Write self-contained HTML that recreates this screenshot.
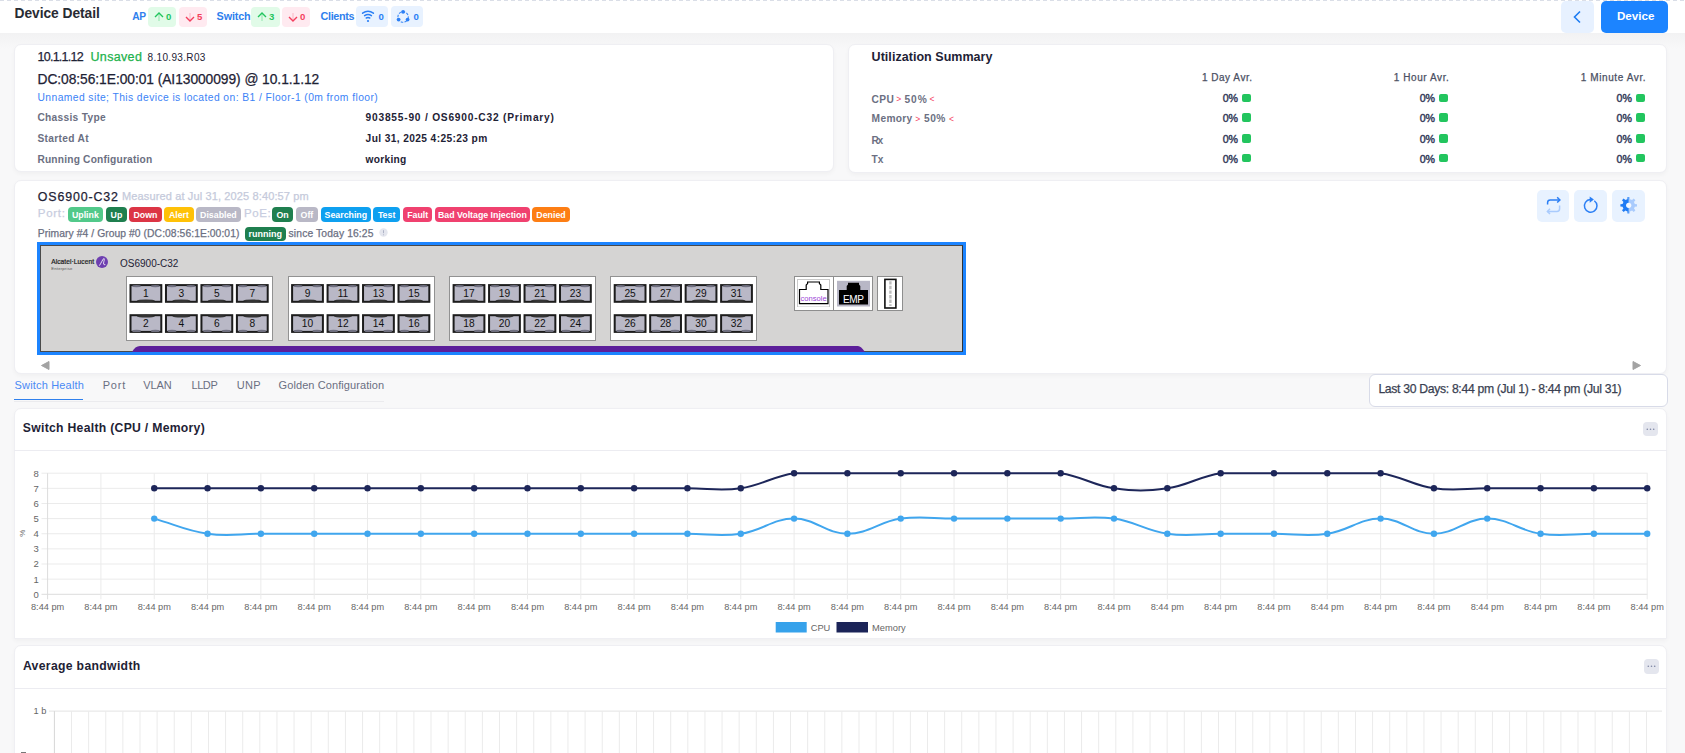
<!DOCTYPE html><html><head><meta charset="utf-8"><style>
html,body{margin:0;padding:0;}
body{width:1685px;height:753px;overflow:hidden;position:relative;background:#f8f8f9;font-family:"Liberation Sans", sans-serif;}
.t{position:absolute;line-height:1;white-space:nowrap;}
.lt{color:#f43f5e;font-size:0.75em;}
.bd{position:absolute;box-sizing:border-box;border-radius:4px;color:#fff;font-weight:700;font-size:8.8px;line-height:16.5px;text-align:center;white-space:nowrap;}
.port{position:absolute;box-sizing:border-box;width:33px;height:19px;border:2px solid #1a1a1a;background:#b9b8c6;font-size:10px;line-height:15px;text-align:center;color:#111;}
</style></head><body>
<div style="position:absolute;left:0px;top:33px;width:1685px;height:16px;background:linear-gradient(#f2f2f3,#f8f8f9);"></div><div style="position:absolute;left:0px;top:0px;width:1685px;height:33px;background:#fff;"></div><div style="position:absolute;left:0px;top:0px;width:1685px;height:1px;background:repeating-linear-gradient(90deg,#dadee7 0 4px,transparent 4px 7px);"></div><div class="t" id="t6746a733" style="left:14.5px;top:7.22px;font-size:13.8px;color:#282b33;font-weight:700;letter-spacing:-0.050px;">Device Detail</div><div class="t" id="t0492b094" style="left:132.3px;top:11.67px;font-size:10.2px;color:#2f80ed;font-weight:700;letter-spacing:-0.5px;">AP</div><div style="position:absolute;left:148px;top:7px;width:28px;height:20px;background:#e1fbe8;border-radius:4px;"></div><div style="position:absolute;left:179px;top:7px;width:28px;height:20px;background:#ffeaf0;border-radius:4px;"></div><div class="t" id="t892bfa46" style="left:216.6px;top:11.16px;font-size:10.8px;color:#2f80ed;font-weight:700;letter-spacing:-0.140px;">Switch</div><div style="position:absolute;left:251px;top:7px;width:29px;height:20px;background:#e1fbe8;border-radius:4px;"></div><div style="position:absolute;left:282px;top:7px;width:28px;height:20px;background:#ffeaf0;border-radius:4px;"></div><div class="t" id="te763ea5b" style="left:320.6px;top:11.16px;font-size:10.8px;color:#2f80ed;font-weight:700;letter-spacing:-0.367px;">Clients</div><div style="position:absolute;left:356px;top:6px;width:32px;height:21px;background:#e8f2ff;border-radius:4px;"></div><div style="position:absolute;left:391px;top:6px;width:32px;height:21px;background:#e8f2ff;border-radius:4px;"></div><svg style="position:absolute;left:154px;top:12px" width="10" height="10" viewBox="0 0 10 10"><path d="M1 5 L5 1 L9 5" fill="none" stroke="#22c55e" stroke-width="1.4"/><path d="M5 2 V9" stroke="#22c55e" stroke-opacity=".35" stroke-width="1.2"/></svg><div class="t" id="t59a71d01" style="left:166px;top:12.27px;font-size:9.6px;color:#22c55e;font-weight:700;">0</div><svg style="position:absolute;left:185px;top:12px" width="10" height="10" viewBox="0 0 10 10"><path d="M1 5 L5 9 L9 5" fill="none" stroke="#f43f5e" stroke-width="1.4"/><path d="M5 1 V8" stroke="#f43f5e" stroke-opacity=".25" stroke-width="1.2"/></svg><div class="t" id="t8c942b37" style="left:197px;top:12.27px;font-size:9.6px;color:#f43f5e;font-weight:700;">5</div><svg style="position:absolute;left:257px;top:12px" width="10" height="10" viewBox="0 0 10 10"><path d="M1 5 L5 1 L9 5" fill="none" stroke="#22c55e" stroke-width="1.4"/><path d="M5 2 V9" stroke="#22c55e" stroke-opacity=".35" stroke-width="1.2"/></svg><div class="t" id="tc1f784ae" style="left:269px;top:12.27px;font-size:9.6px;color:#22c55e;font-weight:700;">3</div><svg style="position:absolute;left:288px;top:12px" width="10" height="10" viewBox="0 0 10 10"><path d="M1 5 L5 9 L9 5" fill="none" stroke="#f43f5e" stroke-width="1.4"/><path d="M5 1 V8" stroke="#f43f5e" stroke-opacity=".25" stroke-width="1.2"/></svg><div class="t" id="tf4d4778f" style="left:300px;top:12.27px;font-size:9.6px;color:#f43f5e;font-weight:700;">0</div><svg style="position:absolute;left:0;top:0" width="1685" height="40"><path d="M362.6 13.2 Q368 9.2 373.4 13.2" fill="none" stroke="#2b7ff5" stroke-width="1.5" stroke-linecap="round"/><path d="M364.6 15.6 Q368 13.2 371.4 15.6" fill="none" stroke="#2b7ff5" stroke-width="1.5" stroke-linecap="round"/><path d="M366.3 18 Q368 17 369.7 18" fill="none" stroke="#2b7ff5" stroke-width="1.5" stroke-linecap="round"/><circle cx="368" cy="21" r="1.1" fill="#2b7ff5"/></svg><div class="t" id="t0e5e067a" style="left:378.5px;top:12.27px;font-size:9.6px;color:#2b7ff5;font-weight:700;">0</div><svg style="position:absolute;left:0;top:0" width="1685" height="40"><circle cx="403.1" cy="17" r="5.2" fill="none" stroke="#2b7ff5" stroke-width="1.1" stroke-dasharray="2.6 1.3" opacity=".9"/><circle cx="403.1" cy="11.8" r="1.9" fill="#2b7ff5"/><circle cx="398.6" cy="19.6" r="1.9" fill="#2b7ff5"/><circle cx="407.6" cy="19.6" r="1.9" fill="#2b7ff5"/></svg><div class="t" id="t439e3643" style="left:413.5px;top:12.27px;font-size:9.6px;color:#2b7ff5;font-weight:700;">0</div><div style="position:absolute;left:1561px;top:1px;width:33px;height:32px;background:#e7f1ff;border-radius:5px;"></div><svg style="position:absolute;left:1572px;top:10px" width="10" height="14" viewBox="0 0 10 14"><path d="M8 1.5 L2.5 7 L8 12.5" fill="none" stroke="#1d7cf2" stroke-width="1.6"/></svg><div style="position:absolute;left:1601px;top:1px;width:67px;height:32px;background:#1c84ff;border-radius:5px;"></div><div class="t" id="t63cf27a8" style="left:1616.9px;top:10.18px;font-size:11.6px;color:#fff;font-weight:700;letter-spacing:0.020px;">Device</div><div style="position:absolute;left:14px;top:44px;width:820px;height:128px;background:#fff;border:1px solid #efeff3;border-radius:7px;box-sizing:border-box;box-shadow:0 2px 4px rgba(0,0,0,.035);"></div><div style="position:absolute;left:848px;top:44px;width:819px;height:129px;background:#fff;border:1px solid #efeff3;border-radius:7px;box-sizing:border-box;box-shadow:0 2px 4px rgba(0,0,0,.035);"></div><div style="position:absolute;left:14px;top:179.5px;width:1653px;height:194.3px;background:#fff;border:1px solid #efeff3;border-radius:7px;box-sizing:border-box;box-shadow:0 2px 4px rgba(0,0,0,.035);"></div><div style="position:absolute;left:14px;top:408px;width:1653px;height:231px;background:#fff;border:1px solid #efeff3;border-radius:7px;box-sizing:border-box;box-shadow:0 2px 4px rgba(0,0,0,.035);border-bottom-left-radius:0;border-bottom-right-radius:0;"></div><div style="position:absolute;left:14px;top:645px;width:1653px;height:130px;background:#fff;border:1px solid #efeff3;border-radius:7px;box-sizing:border-box;box-shadow:0 2px 4px rgba(0,0,0,.035);"></div><div class="t" id="tde0dabcd" style="left:37.5px;top:51.32px;font-size:12.5px;color:#1e2235;font-weight:400;letter-spacing:-0.750px;-webkit-text-stroke:0.25px currentColor;">10.1.1.12</div><div class="t" id="t1f8993fd" style="left:90.5px;top:51.32px;font-size:12.5px;color:#22b24c;font-weight:400;letter-spacing:0.333px;-webkit-text-stroke:0.25px currentColor;">Unsaved</div><div class="t" id="t35ef3340" style="left:147.5px;top:53.44px;font-size:10px;color:#1e2235;font-weight:400;letter-spacing:0.340px;">8.10.93.R03</div><div class="t" id="t7c8b2ab8" style="left:37.5px;top:73.32px;font-size:13.8px;color:#1e2235;font-weight:400;letter-spacing:-0.056px;-webkit-text-stroke:0.25px currentColor;">DC:08:56:1E:00:01 (AI13000099) @ 10.1.1.12</div><div class="t" id="tb4ae7405" style="left:37.5px;top:93.18px;font-size:10.3px;color:#3b82f6;font-weight:400;letter-spacing:0.419px;">Unnamed site; This device is located on: B1 / Floor-1 (0m from floor)</div><div class="t" id="t512f0c50" style="left:37.4px;top:113.27px;font-size:10.2px;color:#6b6f82;font-weight:700;letter-spacing:0.300px;">Chassis Type</div><div class="t" id="ta5a6ee7c" style="left:365.6px;top:113.27px;font-size:10.2px;color:#1e2235;font-weight:700;letter-spacing:0.777px;">903855-90 / OS6900-C32 (Primary)</div><div class="t" id="t8f5a7e33" style="left:37.4px;top:134.17px;font-size:10.2px;color:#6b6f82;font-weight:700;letter-spacing:0.333px;">Started At</div><div class="t" id="t9136239f" style="left:365.6px;top:134.17px;font-size:10.2px;color:#1e2235;font-weight:700;letter-spacing:0.382px;">Jul 31, 2025 4:25:23 pm</div><div class="t" id="tb8d32ed6" style="left:37.4px;top:155.07px;font-size:10.2px;color:#6b6f82;font-weight:700;letter-spacing:0.195px;">Running Configuration</div><div class="t" id="ta1649bf4" style="left:365.6px;top:155.07px;font-size:10.2px;color:#1e2235;font-weight:700;letter-spacing:0.267px;">working</div><div class="t" id="t46e40325" style="left:871.6px;top:50.52px;font-size:12.5px;color:#1e2235;font-weight:700;letter-spacing:0.039px;">Utilization Summary</div><div class="t" id="t7a2198f8" style="left:1201.9px;top:73.03px;font-size:10px;color:#4b5063;font-weight:400;letter-spacing:0.522px;-webkit-text-stroke:0.25px currentColor;">1 Day Avr.</div><div class="t" id="t6891046d" style="left:1393.7px;top:73.03px;font-size:10px;color:#4b5063;font-weight:400;letter-spacing:0.580px;-webkit-text-stroke:0.25px currentColor;">1 Hour Avr.</div><div class="t" id="t676b4f2e" style="left:1580.8px;top:73.03px;font-size:10px;color:#4b5063;font-weight:400;letter-spacing:0.592px;-webkit-text-stroke:0.25px currentColor;">1 Minute Avr.</div><div class="t" id="t26962493" style="left:896.2px;top:95.40px;font-size:8.5px;color:#f43f5e;font-weight:400;">&gt;</div><div class="t" id="td6754439" style="left:904.5px;top:94.57px;font-size:10.2px;color:#6b6f82;font-weight:700;letter-spacing:0.900px;">50%</div><div class="t" id="t37bb389e" style="left:929.5px;top:95.40px;font-size:8.5px;color:#f43f5e;font-weight:400;">&lt;</div><div class="t" id="tdbb544d3" style="left:915.3px;top:115.30px;font-size:8.5px;color:#f43f5e;font-weight:400;">&gt;</div><div class="t" id="t1c25f8e0" style="left:924px;top:114.47px;font-size:10.2px;color:#6b6f82;font-weight:700;letter-spacing:0.500px;">50%</div><div class="t" id="t0425b11f" style="left:949.1px;top:115.30px;font-size:8.5px;color:#f43f5e;font-weight:400;">&lt;</div><div class="t" id="tf166ce25" style="left:871.6px;top:94.57px;font-size:10.2px;color:#6b6f82;font-weight:700;letter-spacing:0.400px;">CPU</div><div class="t" style="right:447px;top:93.43px;font-size:10.6px;color:#363d5c;font-weight:400;-webkit-text-stroke:0.45px #363d5c;letter-spacing:0px;">0%</div><div style="position:absolute;left:1242px;top:93.5px;width:9px;height:8.3px;background:#22c55e;border-radius:2px;"></div><div class="t" style="right:250px;top:93.43px;font-size:10.6px;color:#363d5c;font-weight:400;-webkit-text-stroke:0.45px #363d5c;letter-spacing:0px;">0%</div><div style="position:absolute;left:1439px;top:93.5px;width:9px;height:8.3px;background:#22c55e;border-radius:2px;"></div><div class="t" style="right:53.200000000000045px;top:93.43px;font-size:10.6px;color:#363d5c;font-weight:400;-webkit-text-stroke:0.45px #363d5c;letter-spacing:0px;">0%</div><div style="position:absolute;left:1635.8px;top:93.5px;width:9px;height:8.3px;background:#22c55e;border-radius:2px;"></div><div class="t" id="td928c392" style="left:871.6px;top:114.47px;font-size:10.2px;color:#6b6f82;font-weight:700;letter-spacing:0.320px;">Memory</div><div class="t" style="right:447px;top:113.23px;font-size:10.6px;color:#363d5c;font-weight:400;-webkit-text-stroke:0.45px #363d5c;letter-spacing:0px;">0%</div><div style="position:absolute;left:1242px;top:113.3px;width:9px;height:8.3px;background:#22c55e;border-radius:2px;"></div><div class="t" style="right:250px;top:113.23px;font-size:10.6px;color:#363d5c;font-weight:400;-webkit-text-stroke:0.45px #363d5c;letter-spacing:0px;">0%</div><div style="position:absolute;left:1439px;top:113.3px;width:9px;height:8.3px;background:#22c55e;border-radius:2px;"></div><div class="t" style="right:53.200000000000045px;top:113.23px;font-size:10.6px;color:#363d5c;font-weight:400;-webkit-text-stroke:0.45px #363d5c;letter-spacing:0px;">0%</div><div style="position:absolute;left:1635.8px;top:113.3px;width:9px;height:8.3px;background:#22c55e;border-radius:2px;"></div><div class="t" id="t4b9c8d89" style="left:871.6px;top:135.57px;font-size:10.2px;color:#6b6f82;font-weight:700;letter-spacing:-1.400px;">Rx</div><div class="t" style="right:447px;top:134.23px;font-size:10.6px;color:#363d5c;font-weight:400;-webkit-text-stroke:0.45px #363d5c;letter-spacing:0px;">0%</div><div style="position:absolute;left:1242px;top:134.3px;width:9px;height:8.3px;background:#22c55e;border-radius:2px;"></div><div class="t" style="right:250px;top:134.23px;font-size:10.6px;color:#363d5c;font-weight:400;-webkit-text-stroke:0.45px #363d5c;letter-spacing:0px;">0%</div><div style="position:absolute;left:1439px;top:134.3px;width:9px;height:8.3px;background:#22c55e;border-radius:2px;"></div><div class="t" style="right:53.200000000000045px;top:134.23px;font-size:10.6px;color:#363d5c;font-weight:400;-webkit-text-stroke:0.45px #363d5c;letter-spacing:0px;">0%</div><div style="position:absolute;left:1635.8px;top:134.3px;width:9px;height:8.3px;background:#22c55e;border-radius:2px;"></div><div class="t" id="tdec90b6d" style="left:871.6px;top:155.17px;font-size:10.2px;color:#6b6f82;font-weight:700;letter-spacing:0.000px;">Tx</div><div class="t" style="right:447px;top:154.03px;font-size:10.6px;color:#363d5c;font-weight:400;-webkit-text-stroke:0.45px #363d5c;letter-spacing:0px;">0%</div><div style="position:absolute;left:1242px;top:154px;width:9px;height:8.3px;background:#22c55e;border-radius:2px;"></div><div class="t" style="right:250px;top:154.03px;font-size:10.6px;color:#363d5c;font-weight:400;-webkit-text-stroke:0.45px #363d5c;letter-spacing:0px;">0%</div><div style="position:absolute;left:1439px;top:154px;width:9px;height:8.3px;background:#22c55e;border-radius:2px;"></div><div class="t" style="right:53.200000000000045px;top:154.03px;font-size:10.6px;color:#363d5c;font-weight:400;-webkit-text-stroke:0.45px #363d5c;letter-spacing:0px;">0%</div><div style="position:absolute;left:1635.8px;top:154px;width:9px;height:8.3px;background:#22c55e;border-radius:2px;"></div><div class="t" id="t32b09132" style="left:37.8px;top:190.80px;font-size:12.4px;color:#1e2235;font-weight:400;letter-spacing:0.856px;-webkit-text-stroke:0.25px currentColor;">OS6900-C32</div><div class="t" id="tf94e7f01" style="left:122px;top:191.19px;font-size:11px;color:#c5cadb;font-weight:400;letter-spacing:0.132px;-webkit-text-stroke:0.25px currentColor;">Measured at Jul 31, 2025 8:40:57 pm</div><div class="t" id="t7cd7a179" style="left:37.8px;top:207.87px;font-size:11.5px;color:#c8cde0;font-weight:400;letter-spacing:0.700px;-webkit-text-stroke:0.25px currentColor;">Port:</div><div class="t" id="t058673cd" style="left:244.1px;top:207.87px;font-size:11.5px;color:#c8cde0;font-weight:400;letter-spacing:0.567px;-webkit-text-stroke:0.25px currentColor;">PoE:</div><div class="bd" style="left:68.1px;top:207px;width:34.6px;height:15px;background:#52c98a;">Uplink</div><div class="bd" style="left:106px;top:207px;width:20.9px;height:15px;background:#1f7f4f;">Up</div><div class="bd" style="left:129.2px;top:207px;width:32.4px;height:15px;background:#dc3545;">Down</div><div class="bd" style="left:164.1px;top:207px;width:29.7px;height:15px;background:#ffc107;">Alert</div><div class="bd" style="left:196px;top:207px;width:44.8px;height:15px;background:#b9b8c6;">Disabled</div><div class="bd" style="left:272.1px;top:207px;width:20.8px;height:15px;background:#1f7f4f;">On</div><div class="bd" style="left:296.1px;top:207px;width:21.7px;height:15px;background:#b9b8c6;">Off</div><div class="bd" style="left:321px;top:207px;width:49.7px;height:15px;background:#0ea0f0;">Searching</div><div class="bd" style="left:373.1px;top:207px;width:27.0px;height:15px;background:#0ea0f0;">Test</div><div class="bd" style="left:403.1px;top:207px;width:29.3px;height:15px;background:#f0416f;">Fault</div><div class="bd" style="left:435.1px;top:207px;width:94.6px;height:15px;background:#f0416f;">Bad Voltage Injection</div><div class="bd" style="left:532.1px;top:207px;width:37.8px;height:15px;background:#fd7e14;">Denied</div><div class="t" id="t7e1746b1" style="left:37.8px;top:229.08px;font-size:10.3px;color:#6b6f82;font-weight:400;letter-spacing:0.075px;-webkit-text-stroke:0.25px currentColor;">Primary #4 / Group #0 (DC:08:56:1E:00:01)</div><div class="bd" style="left:245px;top:227.2px;width:40.7px;height:14.3px;background:#1f7f4f;font-size:9px;line-height:14.5px;">running</div><div class="t" id="tdfd09190" style="left:288.6px;top:229.08px;font-size:10.3px;color:#6b6f82;font-weight:400;letter-spacing:0.125px;-webkit-text-stroke:0.25px currentColor;">since Today 16:25</div><svg style="position:absolute;left:378.5px;top:227.5px" width="9" height="9"><circle cx="4.5" cy="4.5" r="4.2" fill="#e4e6ee"/><path d="M4.5 2.2 V5.2" stroke="#aeb3c6" stroke-width="1"/><circle cx="4.5" cy="6.7" r="0.55" fill="#aeb3c6"/></svg><div style="position:absolute;left:1537.2px;top:190px;width:31.6px;height:31.7px;background:#e8f2ff;border-radius:5px;"></div><div style="position:absolute;left:1574.3px;top:190px;width:32.6px;height:31.7px;background:#e8f2ff;border-radius:5px;"></div><div style="position:absolute;left:1612.2px;top:190px;width:32.6px;height:31.7px;background:#e8f2ff;border-radius:5px;"></div><svg style="position:absolute;left:0;top:0" width="1685" height="753"><path d="M1547.6 204.6 V202.6 Q1547.6 199.9 1550.3 199.9 H1559.6" fill="none" stroke="#2b7ff5" stroke-width="1.5"/><path d="M1557.2 197.3 L1559.9 199.9 L1557.2 202.5" fill="none" stroke="#2b7ff5" stroke-width="1.5"/><path d="M1559.6 205.4 V208.7 Q1559.6 211.4 1556.9 211.4 H1547.4" fill="none" stroke="#a9cbfd" stroke-width="1.5"/><path d="M1550 208.8 L1547.4 211.4 L1550 214" fill="none" stroke="#a9cbfd" stroke-width="1.5"/></svg><svg style="position:absolute;left:0;top:0" width="1685" height="753"><path d="M1594.31 200.74 A6.3 6.3 0 1 1 1590.40 199.60" fill="none" stroke="#2b7ff5" stroke-width="1.5"/><path d="M1589.70 196.40 L1593.90 199.60 L1589.70 202.80 Z" fill="#2b7ff5"/></svg><svg style="position:absolute;left:0;top:0" width="1685" height="753"><defs><clipPath id="gl"><rect x="1600" y="190" width="28.70" height="32"/></clipPath><clipPath id="gr"><rect x="1628.70" y="190" width="30" height="32"/></clipPath></defs><path d="M1627.35 199.25 L1627.53 196.98 L1629.87 196.98 L1630.05 199.25 L1630.53 199.38 L1631.56 199.80 L1632.02 200.06 L1633.75 198.59 L1635.41 200.25 L1633.94 201.98 L1634.18 202.41 L1634.61 203.44 L1634.75 203.95 L1637.02 204.13 L1637.02 206.47 L1634.75 206.65 L1634.62 207.13 L1634.20 208.16 L1633.94 208.62 L1635.41 210.35 L1633.75 212.01 L1632.02 210.54 L1631.59 210.78 L1630.56 211.21 L1630.05 211.35 L1629.87 213.62 L1627.53 213.62 L1627.35 211.35 L1626.87 211.22 L1625.84 210.80 L1625.38 210.54 L1623.65 212.01 L1621.99 210.35 L1623.46 208.62 L1623.22 208.19 L1622.79 207.16 L1622.65 206.65 L1620.38 206.47 L1620.38 204.13 L1622.65 203.95 L1622.78 203.47 L1623.20 202.44 L1623.46 201.98 L1621.99 200.25 L1623.65 198.59 L1625.38 200.06 L1625.81 199.82 L1626.84 199.39 Z" fill="#a9cbfd" clip-path="url(#gr)"/><path d="M1627.35 199.25 L1627.53 196.98 L1629.87 196.98 L1630.05 199.25 L1630.53 199.38 L1631.56 199.80 L1632.02 200.06 L1633.75 198.59 L1635.41 200.25 L1633.94 201.98 L1634.18 202.41 L1634.61 203.44 L1634.75 203.95 L1637.02 204.13 L1637.02 206.47 L1634.75 206.65 L1634.62 207.13 L1634.20 208.16 L1633.94 208.62 L1635.41 210.35 L1633.75 212.01 L1632.02 210.54 L1631.59 210.78 L1630.56 211.21 L1630.05 211.35 L1629.87 213.62 L1627.53 213.62 L1627.35 211.35 L1626.87 211.22 L1625.84 210.80 L1625.38 210.54 L1623.65 212.01 L1621.99 210.35 L1623.46 208.62 L1623.22 208.19 L1622.79 207.16 L1622.65 206.65 L1620.38 206.47 L1620.38 204.13 L1622.65 203.95 L1622.78 203.47 L1623.20 202.44 L1623.46 201.98 L1621.99 200.25 L1623.65 198.59 L1625.38 200.06 L1625.81 199.82 L1626.84 199.39 Z" fill="#1f7bf4" clip-path="url(#gl)"/><circle cx="1628.7" cy="205.3" r="2.6" fill="#f4f8ff"/></svg><div style="position:absolute;left:37px;top:242px;width:929px;height:113px;box-sizing:border-box;border:3px solid #1c84ff;"><div style="position:absolute;left:0;top:0;right:0;bottom:0;background:#d5d4d3;border:1px solid #4a4a4a;border-right-color:#333;"></div></div><svg style="position:absolute;left:132px;top:346px" width="733" height="6" viewBox="0 0 733 6"><path d="M0 6 Q3 0 8 0 H726 Q729 0 733 6 Z" fill="#5c1f9a"/></svg><div class="t" id="t6a12271c" style="left:51.2px;top:258.81px;font-size:6.6px;color:#1a1a1a;font-weight:400;letter-spacing:0.077px;-webkit-text-stroke:0.2px #1a1a1a;">Alcatel·Lucent</div><div class="t" id="ta7493001" style="left:51.2px;top:266.74px;font-size:4.2px;color:#555;font-weight:400;letter-spacing:0.222px;">Enterprise</div><svg style="position:absolute;left:96px;top:256px" width="12" height="12" viewBox="0 0 12 12"><circle cx="6" cy="6" r="6" fill="#6e3fb0"/><path d="M3.4 9.6 C5 7.2 6.4 4 7.6 2.7 C8.5 2 8.5 3.6 7.9 5.4 C7.3 7.4 7.4 9.4 9.3 8.6" fill="none" stroke="#fff" stroke-width="0.85"/></svg><div class="t" id="t8b9df947" style="left:120px;top:258.54px;font-size:10px;color:#1e2235;font-weight:400;">OS6900-C32</div><div style="position:absolute;left:126.2px;top:276.2px;width:147px;height:64.5px;background:#fff;border:1px solid #929292;box-sizing:border-box;"></div><div style="position:absolute;left:287.8px;top:276.2px;width:147px;height:64.5px;background:#fff;border:1px solid #929292;box-sizing:border-box;"></div><div style="position:absolute;left:449.3px;top:276.2px;width:147px;height:64.5px;background:#fff;border:1px solid #929292;box-sizing:border-box;"></div><div style="position:absolute;left:610.4px;top:276.2px;width:147px;height:64.5px;background:#fff;border:1px solid #929292;box-sizing:border-box;"></div><svg style="position:absolute;left:0;top:0" width="1685" height="753" font-family="Liberation Sans, sans-serif"><rect x="130.50" y="285.10" width="30.80" height="16.70" fill="#b9b8c6" stroke="#1c1c1c" stroke-width="2"/><ellipse cx="136.50" cy="286.10" rx="4.5" ry="1.2" fill="#707080"/><ellipse cx="155.30" cy="286.10" rx="4.5" ry="1.2" fill="#707080"/><ellipse cx="145.90" cy="300.80" rx="9" ry="1.4" fill="#333"/><text x="145.90" y="297.10" font-size="10.2" text-anchor="middle" fill="#111">1</text><rect x="130.50" y="315.20" width="30.80" height="16.70" fill="#b9b8c6" stroke="#1c1c1c" stroke-width="2"/><ellipse cx="145.90" cy="316.20" rx="9" ry="1.4" fill="#333"/><ellipse cx="136.50" cy="330.90" rx="4.5" ry="1.2" fill="#707080"/><ellipse cx="155.30" cy="330.90" rx="4.5" ry="1.2" fill="#707080"/><text x="145.90" y="327.20" font-size="10.2" text-anchor="middle" fill="#111">2</text><rect x="165.97" y="285.10" width="30.80" height="16.70" fill="#b9b8c6" stroke="#1c1c1c" stroke-width="2"/><ellipse cx="171.97" cy="286.10" rx="4.5" ry="1.2" fill="#707080"/><ellipse cx="190.77" cy="286.10" rx="4.5" ry="1.2" fill="#707080"/><ellipse cx="181.37" cy="300.80" rx="9" ry="1.4" fill="#333"/><text x="181.37" y="297.10" font-size="10.2" text-anchor="middle" fill="#111">3</text><rect x="165.97" y="315.20" width="30.80" height="16.70" fill="#b9b8c6" stroke="#1c1c1c" stroke-width="2"/><ellipse cx="181.37" cy="316.20" rx="9" ry="1.4" fill="#333"/><ellipse cx="171.97" cy="330.90" rx="4.5" ry="1.2" fill="#707080"/><ellipse cx="190.77" cy="330.90" rx="4.5" ry="1.2" fill="#707080"/><text x="181.37" y="327.20" font-size="10.2" text-anchor="middle" fill="#111">4</text><rect x="201.44" y="285.10" width="30.80" height="16.70" fill="#b9b8c6" stroke="#1c1c1c" stroke-width="2"/><ellipse cx="207.44" cy="286.10" rx="4.5" ry="1.2" fill="#707080"/><ellipse cx="226.24" cy="286.10" rx="4.5" ry="1.2" fill="#707080"/><ellipse cx="216.84" cy="300.80" rx="9" ry="1.4" fill="#333"/><text x="216.84" y="297.10" font-size="10.2" text-anchor="middle" fill="#111">5</text><rect x="201.44" y="315.20" width="30.80" height="16.70" fill="#b9b8c6" stroke="#1c1c1c" stroke-width="2"/><ellipse cx="216.84" cy="316.20" rx="9" ry="1.4" fill="#333"/><ellipse cx="207.44" cy="330.90" rx="4.5" ry="1.2" fill="#707080"/><ellipse cx="226.24" cy="330.90" rx="4.5" ry="1.2" fill="#707080"/><text x="216.84" y="327.20" font-size="10.2" text-anchor="middle" fill="#111">6</text><rect x="236.91" y="285.10" width="30.80" height="16.70" fill="#b9b8c6" stroke="#1c1c1c" stroke-width="2"/><ellipse cx="242.91" cy="286.10" rx="4.5" ry="1.2" fill="#707080"/><ellipse cx="261.71" cy="286.10" rx="4.5" ry="1.2" fill="#707080"/><ellipse cx="252.31" cy="300.80" rx="9" ry="1.4" fill="#333"/><text x="252.31" y="297.10" font-size="10.2" text-anchor="middle" fill="#111">7</text><rect x="236.91" y="315.20" width="30.80" height="16.70" fill="#b9b8c6" stroke="#1c1c1c" stroke-width="2"/><ellipse cx="252.31" cy="316.20" rx="9" ry="1.4" fill="#333"/><ellipse cx="242.91" cy="330.90" rx="4.5" ry="1.2" fill="#707080"/><ellipse cx="261.71" cy="330.90" rx="4.5" ry="1.2" fill="#707080"/><text x="252.31" y="327.20" font-size="10.2" text-anchor="middle" fill="#111">8</text><rect x="292.10" y="285.10" width="30.80" height="16.70" fill="#b9b8c6" stroke="#1c1c1c" stroke-width="2"/><ellipse cx="298.10" cy="286.10" rx="4.5" ry="1.2" fill="#707080"/><ellipse cx="316.90" cy="286.10" rx="4.5" ry="1.2" fill="#707080"/><ellipse cx="307.50" cy="300.80" rx="9" ry="1.4" fill="#333"/><text x="307.50" y="297.10" font-size="10.2" text-anchor="middle" fill="#111">9</text><rect x="292.10" y="315.20" width="30.80" height="16.70" fill="#b9b8c6" stroke="#1c1c1c" stroke-width="2"/><ellipse cx="307.50" cy="316.20" rx="9" ry="1.4" fill="#333"/><ellipse cx="298.10" cy="330.90" rx="4.5" ry="1.2" fill="#707080"/><ellipse cx="316.90" cy="330.90" rx="4.5" ry="1.2" fill="#707080"/><text x="307.50" y="327.20" font-size="10.2" text-anchor="middle" fill="#111">10</text><rect x="327.57" y="285.10" width="30.80" height="16.70" fill="#b9b8c6" stroke="#1c1c1c" stroke-width="2"/><ellipse cx="333.57" cy="286.10" rx="4.5" ry="1.2" fill="#707080"/><ellipse cx="352.37" cy="286.10" rx="4.5" ry="1.2" fill="#707080"/><ellipse cx="342.97" cy="300.80" rx="9" ry="1.4" fill="#333"/><text x="342.97" y="297.10" font-size="10.2" text-anchor="middle" fill="#111">11</text><rect x="327.57" y="315.20" width="30.80" height="16.70" fill="#b9b8c6" stroke="#1c1c1c" stroke-width="2"/><ellipse cx="342.97" cy="316.20" rx="9" ry="1.4" fill="#333"/><ellipse cx="333.57" cy="330.90" rx="4.5" ry="1.2" fill="#707080"/><ellipse cx="352.37" cy="330.90" rx="4.5" ry="1.2" fill="#707080"/><text x="342.97" y="327.20" font-size="10.2" text-anchor="middle" fill="#111">12</text><rect x="363.04" y="285.10" width="30.80" height="16.70" fill="#b9b8c6" stroke="#1c1c1c" stroke-width="2"/><ellipse cx="369.04" cy="286.10" rx="4.5" ry="1.2" fill="#707080"/><ellipse cx="387.84" cy="286.10" rx="4.5" ry="1.2" fill="#707080"/><ellipse cx="378.44" cy="300.80" rx="9" ry="1.4" fill="#333"/><text x="378.44" y="297.10" font-size="10.2" text-anchor="middle" fill="#111">13</text><rect x="363.04" y="315.20" width="30.80" height="16.70" fill="#b9b8c6" stroke="#1c1c1c" stroke-width="2"/><ellipse cx="378.44" cy="316.20" rx="9" ry="1.4" fill="#333"/><ellipse cx="369.04" cy="330.90" rx="4.5" ry="1.2" fill="#707080"/><ellipse cx="387.84" cy="330.90" rx="4.5" ry="1.2" fill="#707080"/><text x="378.44" y="327.20" font-size="10.2" text-anchor="middle" fill="#111">14</text><rect x="398.51" y="285.10" width="30.80" height="16.70" fill="#b9b8c6" stroke="#1c1c1c" stroke-width="2"/><ellipse cx="404.51" cy="286.10" rx="4.5" ry="1.2" fill="#707080"/><ellipse cx="423.31" cy="286.10" rx="4.5" ry="1.2" fill="#707080"/><ellipse cx="413.91" cy="300.80" rx="9" ry="1.4" fill="#333"/><text x="413.91" y="297.10" font-size="10.2" text-anchor="middle" fill="#111">15</text><rect x="398.51" y="315.20" width="30.80" height="16.70" fill="#b9b8c6" stroke="#1c1c1c" stroke-width="2"/><ellipse cx="413.91" cy="316.20" rx="9" ry="1.4" fill="#333"/><ellipse cx="404.51" cy="330.90" rx="4.5" ry="1.2" fill="#707080"/><ellipse cx="423.31" cy="330.90" rx="4.5" ry="1.2" fill="#707080"/><text x="413.91" y="327.20" font-size="10.2" text-anchor="middle" fill="#111">16</text><rect x="453.60" y="285.10" width="30.80" height="16.70" fill="#b9b8c6" stroke="#1c1c1c" stroke-width="2"/><ellipse cx="459.60" cy="286.10" rx="4.5" ry="1.2" fill="#707080"/><ellipse cx="478.40" cy="286.10" rx="4.5" ry="1.2" fill="#707080"/><ellipse cx="469.00" cy="300.80" rx="9" ry="1.4" fill="#333"/><text x="469.00" y="297.10" font-size="10.2" text-anchor="middle" fill="#111">17</text><rect x="453.60" y="315.20" width="30.80" height="16.70" fill="#b9b8c6" stroke="#1c1c1c" stroke-width="2"/><ellipse cx="469.00" cy="316.20" rx="9" ry="1.4" fill="#333"/><ellipse cx="459.60" cy="330.90" rx="4.5" ry="1.2" fill="#707080"/><ellipse cx="478.40" cy="330.90" rx="4.5" ry="1.2" fill="#707080"/><text x="469.00" y="327.20" font-size="10.2" text-anchor="middle" fill="#111">18</text><rect x="489.07" y="285.10" width="30.80" height="16.70" fill="#b9b8c6" stroke="#1c1c1c" stroke-width="2"/><ellipse cx="495.07" cy="286.10" rx="4.5" ry="1.2" fill="#707080"/><ellipse cx="513.87" cy="286.10" rx="4.5" ry="1.2" fill="#707080"/><ellipse cx="504.47" cy="300.80" rx="9" ry="1.4" fill="#333"/><text x="504.47" y="297.10" font-size="10.2" text-anchor="middle" fill="#111">19</text><rect x="489.07" y="315.20" width="30.80" height="16.70" fill="#b9b8c6" stroke="#1c1c1c" stroke-width="2"/><ellipse cx="504.47" cy="316.20" rx="9" ry="1.4" fill="#333"/><ellipse cx="495.07" cy="330.90" rx="4.5" ry="1.2" fill="#707080"/><ellipse cx="513.87" cy="330.90" rx="4.5" ry="1.2" fill="#707080"/><text x="504.47" y="327.20" font-size="10.2" text-anchor="middle" fill="#111">20</text><rect x="524.54" y="285.10" width="30.80" height="16.70" fill="#b9b8c6" stroke="#1c1c1c" stroke-width="2"/><ellipse cx="530.54" cy="286.10" rx="4.5" ry="1.2" fill="#707080"/><ellipse cx="549.34" cy="286.10" rx="4.5" ry="1.2" fill="#707080"/><ellipse cx="539.94" cy="300.80" rx="9" ry="1.4" fill="#333"/><text x="539.94" y="297.10" font-size="10.2" text-anchor="middle" fill="#111">21</text><rect x="524.54" y="315.20" width="30.80" height="16.70" fill="#b9b8c6" stroke="#1c1c1c" stroke-width="2"/><ellipse cx="539.94" cy="316.20" rx="9" ry="1.4" fill="#333"/><ellipse cx="530.54" cy="330.90" rx="4.5" ry="1.2" fill="#707080"/><ellipse cx="549.34" cy="330.90" rx="4.5" ry="1.2" fill="#707080"/><text x="539.94" y="327.20" font-size="10.2" text-anchor="middle" fill="#111">22</text><rect x="560.01" y="285.10" width="30.80" height="16.70" fill="#b9b8c6" stroke="#1c1c1c" stroke-width="2"/><ellipse cx="566.01" cy="286.10" rx="4.5" ry="1.2" fill="#707080"/><ellipse cx="584.81" cy="286.10" rx="4.5" ry="1.2" fill="#707080"/><ellipse cx="575.41" cy="300.80" rx="9" ry="1.4" fill="#333"/><text x="575.41" y="297.10" font-size="10.2" text-anchor="middle" fill="#111">23</text><rect x="560.01" y="315.20" width="30.80" height="16.70" fill="#b9b8c6" stroke="#1c1c1c" stroke-width="2"/><ellipse cx="575.41" cy="316.20" rx="9" ry="1.4" fill="#333"/><ellipse cx="566.01" cy="330.90" rx="4.5" ry="1.2" fill="#707080"/><ellipse cx="584.81" cy="330.90" rx="4.5" ry="1.2" fill="#707080"/><text x="575.41" y="327.20" font-size="10.2" text-anchor="middle" fill="#111">24</text><rect x="614.70" y="285.10" width="30.80" height="16.70" fill="#b9b8c6" stroke="#1c1c1c" stroke-width="2"/><ellipse cx="620.70" cy="286.10" rx="4.5" ry="1.2" fill="#707080"/><ellipse cx="639.50" cy="286.10" rx="4.5" ry="1.2" fill="#707080"/><ellipse cx="630.10" cy="300.80" rx="9" ry="1.4" fill="#333"/><text x="630.10" y="297.10" font-size="10.2" text-anchor="middle" fill="#111">25</text><rect x="614.70" y="315.20" width="30.80" height="16.70" fill="#b9b8c6" stroke="#1c1c1c" stroke-width="2"/><ellipse cx="630.10" cy="316.20" rx="9" ry="1.4" fill="#333"/><ellipse cx="620.70" cy="330.90" rx="4.5" ry="1.2" fill="#707080"/><ellipse cx="639.50" cy="330.90" rx="4.5" ry="1.2" fill="#707080"/><text x="630.10" y="327.20" font-size="10.2" text-anchor="middle" fill="#111">26</text><rect x="650.17" y="285.10" width="30.80" height="16.70" fill="#b9b8c6" stroke="#1c1c1c" stroke-width="2"/><ellipse cx="656.17" cy="286.10" rx="4.5" ry="1.2" fill="#707080"/><ellipse cx="674.97" cy="286.10" rx="4.5" ry="1.2" fill="#707080"/><ellipse cx="665.57" cy="300.80" rx="9" ry="1.4" fill="#333"/><text x="665.57" y="297.10" font-size="10.2" text-anchor="middle" fill="#111">27</text><rect x="650.17" y="315.20" width="30.80" height="16.70" fill="#b9b8c6" stroke="#1c1c1c" stroke-width="2"/><ellipse cx="665.57" cy="316.20" rx="9" ry="1.4" fill="#333"/><ellipse cx="656.17" cy="330.90" rx="4.5" ry="1.2" fill="#707080"/><ellipse cx="674.97" cy="330.90" rx="4.5" ry="1.2" fill="#707080"/><text x="665.57" y="327.20" font-size="10.2" text-anchor="middle" fill="#111">28</text><rect x="685.64" y="285.10" width="30.80" height="16.70" fill="#b9b8c6" stroke="#1c1c1c" stroke-width="2"/><ellipse cx="691.64" cy="286.10" rx="4.5" ry="1.2" fill="#707080"/><ellipse cx="710.44" cy="286.10" rx="4.5" ry="1.2" fill="#707080"/><ellipse cx="701.04" cy="300.80" rx="9" ry="1.4" fill="#333"/><text x="701.04" y="297.10" font-size="10.2" text-anchor="middle" fill="#111">29</text><rect x="685.64" y="315.20" width="30.80" height="16.70" fill="#b9b8c6" stroke="#1c1c1c" stroke-width="2"/><ellipse cx="701.04" cy="316.20" rx="9" ry="1.4" fill="#333"/><ellipse cx="691.64" cy="330.90" rx="4.5" ry="1.2" fill="#707080"/><ellipse cx="710.44" cy="330.90" rx="4.5" ry="1.2" fill="#707080"/><text x="701.04" y="327.20" font-size="10.2" text-anchor="middle" fill="#111">30</text><rect x="721.11" y="285.10" width="30.80" height="16.70" fill="#b9b8c6" stroke="#1c1c1c" stroke-width="2"/><ellipse cx="727.11" cy="286.10" rx="4.5" ry="1.2" fill="#707080"/><ellipse cx="745.91" cy="286.10" rx="4.5" ry="1.2" fill="#707080"/><ellipse cx="736.51" cy="300.80" rx="9" ry="1.4" fill="#333"/><text x="736.51" y="297.10" font-size="10.2" text-anchor="middle" fill="#111">31</text><rect x="721.11" y="315.20" width="30.80" height="16.70" fill="#b9b8c6" stroke="#1c1c1c" stroke-width="2"/><ellipse cx="736.51" cy="316.20" rx="9" ry="1.4" fill="#333"/><ellipse cx="727.11" cy="330.90" rx="4.5" ry="1.2" fill="#707080"/><ellipse cx="745.91" cy="330.90" rx="4.5" ry="1.2" fill="#707080"/><text x="736.51" y="327.20" font-size="10.2" text-anchor="middle" fill="#111">32</text></svg><div style="position:absolute;left:794.3px;top:276.3px;width:39.4px;height:34.3px;background:#fff;border:1px solid #8e8e8e;box-sizing:border-box;"></div><svg style="position:absolute;left:797px;top:279px" width="33" height="28" viewBox="0 0 33 28"><rect x="0.5" y="0.5" width="32" height="27.5" fill="#fff" stroke="#c9c9c9" stroke-width="1"/><path d="M2.5 24.7 V10.5 H9.2 V6 L10.6 4.6 V3 H22.4 V4.6 L23.8 6 V10.5 H31 V24.7 Z" fill="#fff" stroke="#000" stroke-width="1.2"/><text x="16.6" y="21.6" font-family="Liberation Sans" font-size="7.6" text-anchor="middle" fill="#9b3fd6">console</text></svg><div style="position:absolute;left:833.3px;top:276.3px;width:39.4px;height:34.3px;background:#fff;border:1px solid #8e8e8e;box-sizing:border-box;"></div><svg style="position:absolute;left:837px;top:279px" width="33" height="28" viewBox="0 0 33 28"><rect x="0" y="1.8" width="33" height="25.7" fill="#b8b7c6"/><path d="M2 25.6 V11 H9.7 V7 L11 5.5 V3.7 H22 V5.5 L23.3 7 V11 H31 V25.6 Z" fill="#000"/><text x="16.3" y="24" font-family="Liberation Sans" font-size="10" font-weight="400" text-anchor="middle" fill="#fff" letter-spacing="-0.4">EMP</text></svg><div style="position:absolute;left:877.2px;top:276.3px;width:25.6px;height:34.3px;background:#fff;border:1px solid #8e8e8e;box-sizing:border-box;"></div><svg style="position:absolute;left:884px;top:278px" width="13" height="31" viewBox="0 0 13 31"><rect x="0.9" y="1.4" width="11" height="28.6" fill="#fff" stroke="#111" stroke-width="1.6"/><path d="M6.4 3.2 V28" stroke="#bdbdbd" stroke-width="2.4" stroke-dasharray="3.4 1.2"/></svg><svg style="position:absolute;left:41px;top:361px" width="9" height="9" viewBox="0 0 9 9"><path d="M8 0.5 V8.5 L0.5 4.5 Z" fill="#a3a3a3" stroke="#a3a3a3" stroke-linejoin="round"/></svg><svg style="position:absolute;left:1632px;top:361px" width="9" height="9" viewBox="0 0 9 9"><path d="M1 0.5 V8.5 L8.5 4.5 Z" fill="#a3a3a3" stroke="#a3a3a3" stroke-linejoin="round"/></svg><div style="position:absolute;left:14px;top:401px;width:370px;height:1px;background:#ebebee;"></div><div style="position:absolute;left:14px;top:398.8px;width:69px;height:1.6px;background:#2f80ed;"></div><div class="t" id="t91959855" style="left:14.6px;top:379.99px;font-size:11px;color:#4a8af5;font-weight:400;letter-spacing:0.167px;">Switch Health</div><div class="t" id="tc869bc9a" style="left:102.7px;top:379.99px;font-size:11px;color:#6b6f82;font-weight:400;letter-spacing:0.833px;">Port</div><div class="t" id="t5107f35e" style="left:143.2px;top:379.99px;font-size:11px;color:#6b6f82;font-weight:400;letter-spacing:-0.067px;">VLAN</div><div class="t" id="t45c15305" style="left:191.5px;top:379.99px;font-size:11px;color:#6b6f82;font-weight:400;letter-spacing:-0.433px;">LLDP</div><div class="t" id="te445582e" style="left:236.8px;top:379.99px;font-size:11px;color:#6b6f82;font-weight:400;letter-spacing:0.250px;">UNP</div><div class="t" id="t44544e35" style="left:278.6px;top:379.99px;font-size:11px;color:#6b6f82;font-weight:400;letter-spacing:0.084px;">Golden Configuration</div><div style="position:absolute;left:1368.5px;top:374px;width:299px;height:32.5px;background:#fff;border:1px solid #d8dbe8;border-radius:6px;box-sizing:border-box;"></div><div class="t" id="t2b5871eb" style="left:1378.4px;top:383.07px;font-size:12.2px;color:#3a3f52;font-weight:400;letter-spacing:-0.315px;-webkit-text-stroke:0.25px currentColor;">Last 30 Days: 8:44 pm (Jul 1) - 8:44 pm (Jul 31)</div><div class="t" id="t389ffd28" style="left:22.8px;top:422.17px;font-size:12.2px;color:#1e2235;font-weight:700;letter-spacing:0.293px;">Switch Health (CPU / Memory)</div><div style="position:absolute;left:1643.4px;top:421.5px;width:15px;height:14.5px;background:#e4e6ee;border-radius:4px;"></div><svg style="position:absolute;left:1643.4px;top:421.5px" width="15" height="14.5"><circle cx="4.3" cy="7.2" r="0.8" fill="#7d84a3"/><circle cx="7.5" cy="7.2" r="0.8" fill="#7d84a3"/><circle cx="10.7" cy="7.2" r="0.8" fill="#7d84a3"/></svg><div style="position:absolute;left:14px;top:450px;width:1653px;height:1px;background:#ececf1;"></div><div class="t" id="ta76ee2ac" style="left:22.9px;top:659.67px;font-size:12.2px;color:#1e2235;font-weight:700;letter-spacing:0.337px;">Average bandwidth</div><div style="position:absolute;left:1643.6px;top:659.4px;width:15px;height:14.5px;background:#e4e6ee;border-radius:4px;"></div><svg style="position:absolute;left:1643.6px;top:659.4px" width="15" height="14.5"><circle cx="4.3" cy="7.2" r="0.8" fill="#7d84a3"/><circle cx="7.5" cy="7.2" r="0.8" fill="#7d84a3"/><circle cx="10.7" cy="7.2" r="0.8" fill="#7d84a3"/></svg><div style="position:absolute;left:14px;top:688px;width:1653px;height:1px;background:#ececf1;"></div>
<svg style="position:absolute;left:0;top:0" width="1685" height="753" viewBox="0 0 1685 753" font-family="Liberation Sans, sans-serif"><line x1="41.5" x2="1647.5" y1="594.30" y2="594.30" stroke="#dcdcdc" stroke-width="1"/><text x="38.7" y="597.70" font-size="9.5" text-anchor="end" fill="#666">0</text><line x1="41.5" x2="1647.5" y1="579.16" y2="579.16" stroke="#ebebeb" stroke-width="1"/><text x="38.7" y="582.56" font-size="9.5" text-anchor="end" fill="#666">1</text><line x1="41.5" x2="1647.5" y1="564.02" y2="564.02" stroke="#ebebeb" stroke-width="1"/><text x="38.7" y="567.42" font-size="9.5" text-anchor="end" fill="#666">2</text><line x1="41.5" x2="1647.5" y1="548.88" y2="548.88" stroke="#ebebeb" stroke-width="1"/><text x="38.7" y="552.28" font-size="9.5" text-anchor="end" fill="#666">3</text><line x1="41.5" x2="1647.5" y1="533.74" y2="533.74" stroke="#ebebeb" stroke-width="1"/><text x="38.7" y="537.14" font-size="9.5" text-anchor="end" fill="#666">4</text><line x1="41.5" x2="1647.5" y1="518.60" y2="518.60" stroke="#ebebeb" stroke-width="1"/><text x="38.7" y="522.00" font-size="9.5" text-anchor="end" fill="#666">5</text><line x1="41.5" x2="1647.5" y1="503.46" y2="503.46" stroke="#ebebeb" stroke-width="1"/><text x="38.7" y="506.86" font-size="9.5" text-anchor="end" fill="#666">6</text><line x1="41.5" x2="1647.5" y1="488.32" y2="488.32" stroke="#ebebeb" stroke-width="1"/><text x="38.7" y="491.72" font-size="9.5" text-anchor="end" fill="#666">7</text><line x1="41.5" x2="1647.5" y1="473.18" y2="473.18" stroke="#ebebeb" stroke-width="1"/><text x="38.7" y="476.58" font-size="9.5" text-anchor="end" fill="#666">8</text><line x1="47.60" x2="47.60" y1="473.18" y2="599.30" stroke="#dcdcdc" stroke-width="1"/><text x="47.60" y="609.8" font-size="9.2" text-anchor="middle" fill="#666">8:44 pm</text><line x1="100.92" x2="100.92" y1="473.18" y2="599.30" stroke="#ebebeb" stroke-width="1"/><text x="100.92" y="609.8" font-size="9.2" text-anchor="middle" fill="#666">8:44 pm</text><line x1="154.24" x2="154.24" y1="473.18" y2="599.30" stroke="#ebebeb" stroke-width="1"/><text x="154.24" y="609.8" font-size="9.2" text-anchor="middle" fill="#666">8:44 pm</text><line x1="207.56" x2="207.56" y1="473.18" y2="599.30" stroke="#ebebeb" stroke-width="1"/><text x="207.56" y="609.8" font-size="9.2" text-anchor="middle" fill="#666">8:44 pm</text><line x1="260.88" x2="260.88" y1="473.18" y2="599.30" stroke="#ebebeb" stroke-width="1"/><text x="260.88" y="609.8" font-size="9.2" text-anchor="middle" fill="#666">8:44 pm</text><line x1="314.20" x2="314.20" y1="473.18" y2="599.30" stroke="#ebebeb" stroke-width="1"/><text x="314.20" y="609.8" font-size="9.2" text-anchor="middle" fill="#666">8:44 pm</text><line x1="367.52" x2="367.52" y1="473.18" y2="599.30" stroke="#ebebeb" stroke-width="1"/><text x="367.52" y="609.8" font-size="9.2" text-anchor="middle" fill="#666">8:44 pm</text><line x1="420.84" x2="420.84" y1="473.18" y2="599.30" stroke="#ebebeb" stroke-width="1"/><text x="420.84" y="609.8" font-size="9.2" text-anchor="middle" fill="#666">8:44 pm</text><line x1="474.16" x2="474.16" y1="473.18" y2="599.30" stroke="#ebebeb" stroke-width="1"/><text x="474.16" y="609.8" font-size="9.2" text-anchor="middle" fill="#666">8:44 pm</text><line x1="527.48" x2="527.48" y1="473.18" y2="599.30" stroke="#ebebeb" stroke-width="1"/><text x="527.48" y="609.8" font-size="9.2" text-anchor="middle" fill="#666">8:44 pm</text><line x1="580.80" x2="580.80" y1="473.18" y2="599.30" stroke="#ebebeb" stroke-width="1"/><text x="580.80" y="609.8" font-size="9.2" text-anchor="middle" fill="#666">8:44 pm</text><line x1="634.12" x2="634.12" y1="473.18" y2="599.30" stroke="#ebebeb" stroke-width="1"/><text x="634.12" y="609.8" font-size="9.2" text-anchor="middle" fill="#666">8:44 pm</text><line x1="687.44" x2="687.44" y1="473.18" y2="599.30" stroke="#ebebeb" stroke-width="1"/><text x="687.44" y="609.8" font-size="9.2" text-anchor="middle" fill="#666">8:44 pm</text><line x1="740.76" x2="740.76" y1="473.18" y2="599.30" stroke="#ebebeb" stroke-width="1"/><text x="740.76" y="609.8" font-size="9.2" text-anchor="middle" fill="#666">8:44 pm</text><line x1="794.08" x2="794.08" y1="473.18" y2="599.30" stroke="#ebebeb" stroke-width="1"/><text x="794.08" y="609.8" font-size="9.2" text-anchor="middle" fill="#666">8:44 pm</text><line x1="847.40" x2="847.40" y1="473.18" y2="599.30" stroke="#ebebeb" stroke-width="1"/><text x="847.40" y="609.8" font-size="9.2" text-anchor="middle" fill="#666">8:44 pm</text><line x1="900.72" x2="900.72" y1="473.18" y2="599.30" stroke="#ebebeb" stroke-width="1"/><text x="900.72" y="609.8" font-size="9.2" text-anchor="middle" fill="#666">8:44 pm</text><line x1="954.04" x2="954.04" y1="473.18" y2="599.30" stroke="#ebebeb" stroke-width="1"/><text x="954.04" y="609.8" font-size="9.2" text-anchor="middle" fill="#666">8:44 pm</text><line x1="1007.36" x2="1007.36" y1="473.18" y2="599.30" stroke="#ebebeb" stroke-width="1"/><text x="1007.36" y="609.8" font-size="9.2" text-anchor="middle" fill="#666">8:44 pm</text><line x1="1060.68" x2="1060.68" y1="473.18" y2="599.30" stroke="#ebebeb" stroke-width="1"/><text x="1060.68" y="609.8" font-size="9.2" text-anchor="middle" fill="#666">8:44 pm</text><line x1="1114.00" x2="1114.00" y1="473.18" y2="599.30" stroke="#ebebeb" stroke-width="1"/><text x="1114.00" y="609.8" font-size="9.2" text-anchor="middle" fill="#666">8:44 pm</text><line x1="1167.32" x2="1167.32" y1="473.18" y2="599.30" stroke="#ebebeb" stroke-width="1"/><text x="1167.32" y="609.8" font-size="9.2" text-anchor="middle" fill="#666">8:44 pm</text><line x1="1220.64" x2="1220.64" y1="473.18" y2="599.30" stroke="#ebebeb" stroke-width="1"/><text x="1220.64" y="609.8" font-size="9.2" text-anchor="middle" fill="#666">8:44 pm</text><line x1="1273.96" x2="1273.96" y1="473.18" y2="599.30" stroke="#ebebeb" stroke-width="1"/><text x="1273.96" y="609.8" font-size="9.2" text-anchor="middle" fill="#666">8:44 pm</text><line x1="1327.28" x2="1327.28" y1="473.18" y2="599.30" stroke="#ebebeb" stroke-width="1"/><text x="1327.28" y="609.8" font-size="9.2" text-anchor="middle" fill="#666">8:44 pm</text><line x1="1380.60" x2="1380.60" y1="473.18" y2="599.30" stroke="#ebebeb" stroke-width="1"/><text x="1380.60" y="609.8" font-size="9.2" text-anchor="middle" fill="#666">8:44 pm</text><line x1="1433.92" x2="1433.92" y1="473.18" y2="599.30" stroke="#ebebeb" stroke-width="1"/><text x="1433.92" y="609.8" font-size="9.2" text-anchor="middle" fill="#666">8:44 pm</text><line x1="1487.24" x2="1487.24" y1="473.18" y2="599.30" stroke="#ebebeb" stroke-width="1"/><text x="1487.24" y="609.8" font-size="9.2" text-anchor="middle" fill="#666">8:44 pm</text><line x1="1540.56" x2="1540.56" y1="473.18" y2="599.30" stroke="#ebebeb" stroke-width="1"/><text x="1540.56" y="609.8" font-size="9.2" text-anchor="middle" fill="#666">8:44 pm</text><line x1="1593.88" x2="1593.88" y1="473.18" y2="599.30" stroke="#ebebeb" stroke-width="1"/><text x="1593.88" y="609.8" font-size="9.2" text-anchor="middle" fill="#666">8:44 pm</text><line x1="1647.20" x2="1647.20" y1="473.18" y2="599.30" stroke="#ebebeb" stroke-width="1"/><text x="1647.20" y="609.8" font-size="9.2" text-anchor="middle" fill="#666">8:44 pm</text><text transform="translate(25,533.3) rotate(-90)" font-size="8" text-anchor="middle" fill="#666">%</text><path d="M154.24 488.32 C175.57 488.32 186.23 488.32 207.56 488.32 C228.89 488.32 239.55 488.32 260.88 488.32 C282.21 488.32 292.87 488.32 314.20 488.32 C335.53 488.32 346.19 488.32 367.52 488.32 C388.85 488.32 399.51 488.32 420.84 488.32 C442.17 488.32 452.83 488.32 474.16 488.32 C495.49 488.32 506.15 488.32 527.48 488.32 C548.81 488.32 559.47 488.32 580.80 488.32 C602.13 488.32 612.79 488.32 634.12 488.32 C655.45 488.32 666.11 488.32 687.44 488.32 C708.77 488.32 719.85 491.29 740.76 488.32 C762.50 485.23 772.34 476.27 794.08 473.18 C814.99 473.18 826.07 473.18 847.40 473.18 C868.73 473.18 879.39 473.18 900.72 473.18 C922.05 473.18 932.71 473.18 954.04 473.18 C975.37 473.18 986.03 473.18 1007.36 473.18 C1028.69 473.18 1039.77 473.18 1060.68 473.18 C1082.42 476.27 1092.26 485.23 1114.00 488.32 C1134.91 491.29 1146.41 491.29 1167.32 488.32 C1189.06 485.23 1198.90 476.27 1220.64 473.18 C1241.55 473.18 1252.63 473.18 1273.96 473.18 C1295.29 473.18 1305.95 473.18 1327.28 473.18 C1348.61 473.18 1359.69 473.18 1380.60 473.18 C1402.34 476.27 1412.18 485.23 1433.92 488.32 C1454.83 491.29 1465.91 488.32 1487.24 488.32 C1508.57 488.32 1519.23 488.32 1540.56 488.32 C1561.89 488.32 1572.55 488.32 1593.88 488.32 C1615.21 488.32 1625.87 488.32 1647.20 488.32" fill="none" stroke="#1d2659" stroke-width="2"/><circle cx="154.24" cy="488.32" r="3.2" fill="#1d2659"/><circle cx="207.56" cy="488.32" r="3.2" fill="#1d2659"/><circle cx="260.88" cy="488.32" r="3.2" fill="#1d2659"/><circle cx="314.20" cy="488.32" r="3.2" fill="#1d2659"/><circle cx="367.52" cy="488.32" r="3.2" fill="#1d2659"/><circle cx="420.84" cy="488.32" r="3.2" fill="#1d2659"/><circle cx="474.16" cy="488.32" r="3.2" fill="#1d2659"/><circle cx="527.48" cy="488.32" r="3.2" fill="#1d2659"/><circle cx="580.80" cy="488.32" r="3.2" fill="#1d2659"/><circle cx="634.12" cy="488.32" r="3.2" fill="#1d2659"/><circle cx="687.44" cy="488.32" r="3.2" fill="#1d2659"/><circle cx="740.76" cy="488.32" r="3.2" fill="#1d2659"/><circle cx="794.08" cy="473.18" r="3.2" fill="#1d2659"/><circle cx="847.40" cy="473.18" r="3.2" fill="#1d2659"/><circle cx="900.72" cy="473.18" r="3.2" fill="#1d2659"/><circle cx="954.04" cy="473.18" r="3.2" fill="#1d2659"/><circle cx="1007.36" cy="473.18" r="3.2" fill="#1d2659"/><circle cx="1060.68" cy="473.18" r="3.2" fill="#1d2659"/><circle cx="1114.00" cy="488.32" r="3.2" fill="#1d2659"/><circle cx="1167.32" cy="488.32" r="3.2" fill="#1d2659"/><circle cx="1220.64" cy="473.18" r="3.2" fill="#1d2659"/><circle cx="1273.96" cy="473.18" r="3.2" fill="#1d2659"/><circle cx="1327.28" cy="473.18" r="3.2" fill="#1d2659"/><circle cx="1380.60" cy="473.18" r="3.2" fill="#1d2659"/><circle cx="1433.92" cy="488.32" r="3.2" fill="#1d2659"/><circle cx="1487.24" cy="488.32" r="3.2" fill="#1d2659"/><circle cx="1540.56" cy="488.32" r="3.2" fill="#1d2659"/><circle cx="1593.88" cy="488.32" r="3.2" fill="#1d2659"/><circle cx="1647.20" cy="488.32" r="3.2" fill="#1d2659"/><path d="M154.24 518.60 C175.57 524.66 185.82 530.65 207.56 533.74 C228.47 536.71 239.55 533.74 260.88 533.74 C282.21 533.74 292.87 533.74 314.20 533.74 C335.53 533.74 346.19 533.74 367.52 533.74 C388.85 533.74 399.51 533.74 420.84 533.74 C442.17 533.74 452.83 533.74 474.16 533.74 C495.49 533.74 506.15 533.74 527.48 533.74 C548.81 533.74 559.47 533.74 580.80 533.74 C602.13 533.74 612.79 533.74 634.12 533.74 C655.45 533.74 666.11 533.74 687.44 533.74 C708.77 533.74 719.85 536.71 740.76 533.74 C762.50 530.65 772.75 518.60 794.08 518.60 C815.41 518.60 826.07 533.74 847.40 533.74 C868.73 533.74 878.98 521.69 900.72 518.60 C921.63 515.63 932.71 518.60 954.04 518.60 C975.37 518.60 986.03 518.60 1007.36 518.60 C1028.69 518.60 1039.35 518.60 1060.68 518.60 C1082.01 518.60 1093.09 515.63 1114.00 518.60 C1135.74 521.69 1145.58 530.65 1167.32 533.74 C1188.23 536.71 1199.31 533.74 1220.64 533.74 C1241.97 533.74 1252.63 533.74 1273.96 533.74 C1295.29 533.74 1306.37 536.71 1327.28 533.74 C1349.02 530.65 1359.27 518.60 1380.60 518.60 C1401.93 518.60 1412.59 533.74 1433.92 533.74 C1455.25 533.74 1465.91 518.60 1487.24 518.60 C1508.57 518.60 1518.82 530.65 1540.56 533.74 C1561.47 536.71 1572.55 533.74 1593.88 533.74 C1615.21 533.74 1625.87 533.74 1647.20 533.74" fill="none" stroke="#40a6ee" stroke-width="2"/><circle cx="154.24" cy="518.60" r="3.2" fill="#40a6ee"/><circle cx="207.56" cy="533.74" r="3.2" fill="#40a6ee"/><circle cx="260.88" cy="533.74" r="3.2" fill="#40a6ee"/><circle cx="314.20" cy="533.74" r="3.2" fill="#40a6ee"/><circle cx="367.52" cy="533.74" r="3.2" fill="#40a6ee"/><circle cx="420.84" cy="533.74" r="3.2" fill="#40a6ee"/><circle cx="474.16" cy="533.74" r="3.2" fill="#40a6ee"/><circle cx="527.48" cy="533.74" r="3.2" fill="#40a6ee"/><circle cx="580.80" cy="533.74" r="3.2" fill="#40a6ee"/><circle cx="634.12" cy="533.74" r="3.2" fill="#40a6ee"/><circle cx="687.44" cy="533.74" r="3.2" fill="#40a6ee"/><circle cx="740.76" cy="533.74" r="3.2" fill="#40a6ee"/><circle cx="794.08" cy="518.60" r="3.2" fill="#40a6ee"/><circle cx="847.40" cy="533.74" r="3.2" fill="#40a6ee"/><circle cx="900.72" cy="518.60" r="3.2" fill="#40a6ee"/><circle cx="954.04" cy="518.60" r="3.2" fill="#40a6ee"/><circle cx="1007.36" cy="518.60" r="3.2" fill="#40a6ee"/><circle cx="1060.68" cy="518.60" r="3.2" fill="#40a6ee"/><circle cx="1114.00" cy="518.60" r="3.2" fill="#40a6ee"/><circle cx="1167.32" cy="533.74" r="3.2" fill="#40a6ee"/><circle cx="1220.64" cy="533.74" r="3.2" fill="#40a6ee"/><circle cx="1273.96" cy="533.74" r="3.2" fill="#40a6ee"/><circle cx="1327.28" cy="533.74" r="3.2" fill="#40a6ee"/><circle cx="1380.60" cy="518.60" r="3.2" fill="#40a6ee"/><circle cx="1433.92" cy="533.74" r="3.2" fill="#40a6ee"/><circle cx="1487.24" cy="518.60" r="3.2" fill="#40a6ee"/><circle cx="1540.56" cy="533.74" r="3.2" fill="#40a6ee"/><circle cx="1593.88" cy="533.74" r="3.2" fill="#40a6ee"/><circle cx="1647.20" cy="533.74" r="3.2" fill="#40a6ee"/><rect x="775.7" y="622" width="31" height="10.5" fill="#36a2eb"/><text x="810.7" y="630.5" font-size="9.3" fill="#666">CPU</text><rect x="836.5" y="622" width="31.5" height="10.5" fill="#1b2458"/><text x="872.1" y="630.5" font-size="9.3" fill="#666">Memory</text><line x1="49" x2="1662" y1="711.1" y2="711.1" stroke="#e3e3e3"/><rect x="21" y="752" width="5" height="1" fill="#777"/><text x="46.5" y="714.3" font-size="9.3" text-anchor="end" fill="#666">1 b</text><line x1="54.40" x2="54.40" y1="711.1" y2="760" stroke="#d6d6d6"/><line x1="71.52" x2="71.52" y1="711.1" y2="760" stroke="#ebebeb"/><line x1="88.64" x2="88.64" y1="711.1" y2="760" stroke="#ebebeb"/><line x1="105.76" x2="105.76" y1="711.1" y2="760" stroke="#ebebeb"/><line x1="122.88" x2="122.88" y1="711.1" y2="760" stroke="#ebebeb"/><line x1="140.00" x2="140.00" y1="711.1" y2="760" stroke="#ebebeb"/><line x1="157.12" x2="157.12" y1="711.1" y2="760" stroke="#ebebeb"/><line x1="174.24" x2="174.24" y1="711.1" y2="760" stroke="#ebebeb"/><line x1="191.35" x2="191.35" y1="711.1" y2="760" stroke="#ebebeb"/><line x1="208.47" x2="208.47" y1="711.1" y2="760" stroke="#ebebeb"/><line x1="225.59" x2="225.59" y1="711.1" y2="760" stroke="#ebebeb"/><line x1="242.71" x2="242.71" y1="711.1" y2="760" stroke="#ebebeb"/><line x1="259.83" x2="259.83" y1="711.1" y2="760" stroke="#ebebeb"/><line x1="276.95" x2="276.95" y1="711.1" y2="760" stroke="#ebebeb"/><line x1="294.07" x2="294.07" y1="711.1" y2="760" stroke="#ebebeb"/><line x1="311.19" x2="311.19" y1="711.1" y2="760" stroke="#ebebeb"/><line x1="328.31" x2="328.31" y1="711.1" y2="760" stroke="#ebebeb"/><line x1="345.43" x2="345.43" y1="711.1" y2="760" stroke="#ebebeb"/><line x1="362.55" x2="362.55" y1="711.1" y2="760" stroke="#ebebeb"/><line x1="379.67" x2="379.67" y1="711.1" y2="760" stroke="#ebebeb"/><line x1="396.79" x2="396.79" y1="711.1" y2="760" stroke="#ebebeb"/><line x1="413.91" x2="413.91" y1="711.1" y2="760" stroke="#ebebeb"/><line x1="431.03" x2="431.03" y1="711.1" y2="760" stroke="#ebebeb"/><line x1="448.15" x2="448.15" y1="711.1" y2="760" stroke="#ebebeb"/><line x1="465.26" x2="465.26" y1="711.1" y2="760" stroke="#ebebeb"/><line x1="482.38" x2="482.38" y1="711.1" y2="760" stroke="#ebebeb"/><line x1="499.50" x2="499.50" y1="711.1" y2="760" stroke="#ebebeb"/><line x1="516.62" x2="516.62" y1="711.1" y2="760" stroke="#ebebeb"/><line x1="533.74" x2="533.74" y1="711.1" y2="760" stroke="#ebebeb"/><line x1="550.86" x2="550.86" y1="711.1" y2="760" stroke="#ebebeb"/><line x1="567.98" x2="567.98" y1="711.1" y2="760" stroke="#ebebeb"/><line x1="585.10" x2="585.10" y1="711.1" y2="760" stroke="#ebebeb"/><line x1="602.22" x2="602.22" y1="711.1" y2="760" stroke="#ebebeb"/><line x1="619.34" x2="619.34" y1="711.1" y2="760" stroke="#ebebeb"/><line x1="636.46" x2="636.46" y1="711.1" y2="760" stroke="#ebebeb"/><line x1="653.58" x2="653.58" y1="711.1" y2="760" stroke="#ebebeb"/><line x1="670.70" x2="670.70" y1="711.1" y2="760" stroke="#ebebeb"/><line x1="687.82" x2="687.82" y1="711.1" y2="760" stroke="#ebebeb"/><line x1="704.94" x2="704.94" y1="711.1" y2="760" stroke="#ebebeb"/><line x1="722.05" x2="722.05" y1="711.1" y2="760" stroke="#ebebeb"/><line x1="739.17" x2="739.17" y1="711.1" y2="760" stroke="#ebebeb"/><line x1="756.29" x2="756.29" y1="711.1" y2="760" stroke="#ebebeb"/><line x1="773.41" x2="773.41" y1="711.1" y2="760" stroke="#ebebeb"/><line x1="790.53" x2="790.53" y1="711.1" y2="760" stroke="#ebebeb"/><line x1="807.65" x2="807.65" y1="711.1" y2="760" stroke="#ebebeb"/><line x1="824.77" x2="824.77" y1="711.1" y2="760" stroke="#ebebeb"/><line x1="841.89" x2="841.89" y1="711.1" y2="760" stroke="#ebebeb"/><line x1="859.01" x2="859.01" y1="711.1" y2="760" stroke="#ebebeb"/><line x1="876.13" x2="876.13" y1="711.1" y2="760" stroke="#ebebeb"/><line x1="893.25" x2="893.25" y1="711.1" y2="760" stroke="#ebebeb"/><line x1="910.37" x2="910.37" y1="711.1" y2="760" stroke="#ebebeb"/><line x1="927.49" x2="927.49" y1="711.1" y2="760" stroke="#ebebeb"/><line x1="944.61" x2="944.61" y1="711.1" y2="760" stroke="#ebebeb"/><line x1="961.73" x2="961.73" y1="711.1" y2="760" stroke="#ebebeb"/><line x1="978.85" x2="978.85" y1="711.1" y2="760" stroke="#ebebeb"/><line x1="995.96" x2="995.96" y1="711.1" y2="760" stroke="#ebebeb"/><line x1="1013.08" x2="1013.08" y1="711.1" y2="760" stroke="#ebebeb"/><line x1="1030.20" x2="1030.20" y1="711.1" y2="760" stroke="#ebebeb"/><line x1="1047.32" x2="1047.32" y1="711.1" y2="760" stroke="#ebebeb"/><line x1="1064.44" x2="1064.44" y1="711.1" y2="760" stroke="#ebebeb"/><line x1="1081.56" x2="1081.56" y1="711.1" y2="760" stroke="#ebebeb"/><line x1="1098.68" x2="1098.68" y1="711.1" y2="760" stroke="#ebebeb"/><line x1="1115.80" x2="1115.80" y1="711.1" y2="760" stroke="#ebebeb"/><line x1="1132.92" x2="1132.92" y1="711.1" y2="760" stroke="#ebebeb"/><line x1="1150.04" x2="1150.04" y1="711.1" y2="760" stroke="#ebebeb"/><line x1="1167.16" x2="1167.16" y1="711.1" y2="760" stroke="#ebebeb"/><line x1="1184.28" x2="1184.28" y1="711.1" y2="760" stroke="#ebebeb"/><line x1="1201.40" x2="1201.40" y1="711.1" y2="760" stroke="#ebebeb"/><line x1="1218.52" x2="1218.52" y1="711.1" y2="760" stroke="#ebebeb"/><line x1="1235.64" x2="1235.64" y1="711.1" y2="760" stroke="#ebebeb"/><line x1="1252.75" x2="1252.75" y1="711.1" y2="760" stroke="#ebebeb"/><line x1="1269.87" x2="1269.87" y1="711.1" y2="760" stroke="#ebebeb"/><line x1="1286.99" x2="1286.99" y1="711.1" y2="760" stroke="#ebebeb"/><line x1="1304.11" x2="1304.11" y1="711.1" y2="760" stroke="#ebebeb"/><line x1="1321.23" x2="1321.23" y1="711.1" y2="760" stroke="#ebebeb"/><line x1="1338.35" x2="1338.35" y1="711.1" y2="760" stroke="#ebebeb"/><line x1="1355.47" x2="1355.47" y1="711.1" y2="760" stroke="#ebebeb"/><line x1="1372.59" x2="1372.59" y1="711.1" y2="760" stroke="#ebebeb"/><line x1="1389.71" x2="1389.71" y1="711.1" y2="760" stroke="#ebebeb"/><line x1="1406.83" x2="1406.83" y1="711.1" y2="760" stroke="#ebebeb"/><line x1="1423.95" x2="1423.95" y1="711.1" y2="760" stroke="#ebebeb"/><line x1="1441.07" x2="1441.07" y1="711.1" y2="760" stroke="#ebebeb"/><line x1="1458.19" x2="1458.19" y1="711.1" y2="760" stroke="#ebebeb"/><line x1="1475.31" x2="1475.31" y1="711.1" y2="760" stroke="#ebebeb"/><line x1="1492.43" x2="1492.43" y1="711.1" y2="760" stroke="#ebebeb"/><line x1="1509.55" x2="1509.55" y1="711.1" y2="760" stroke="#ebebeb"/><line x1="1526.66" x2="1526.66" y1="711.1" y2="760" stroke="#ebebeb"/><line x1="1543.78" x2="1543.78" y1="711.1" y2="760" stroke="#ebebeb"/><line x1="1560.90" x2="1560.90" y1="711.1" y2="760" stroke="#ebebeb"/><line x1="1578.02" x2="1578.02" y1="711.1" y2="760" stroke="#ebebeb"/><line x1="1595.14" x2="1595.14" y1="711.1" y2="760" stroke="#ebebeb"/><line x1="1612.26" x2="1612.26" y1="711.1" y2="760" stroke="#ebebeb"/><line x1="1629.38" x2="1629.38" y1="711.1" y2="760" stroke="#ebebeb"/><line x1="1646.50" x2="1646.50" y1="711.1" y2="760" stroke="#ebebeb"/></svg>
</body></html>
